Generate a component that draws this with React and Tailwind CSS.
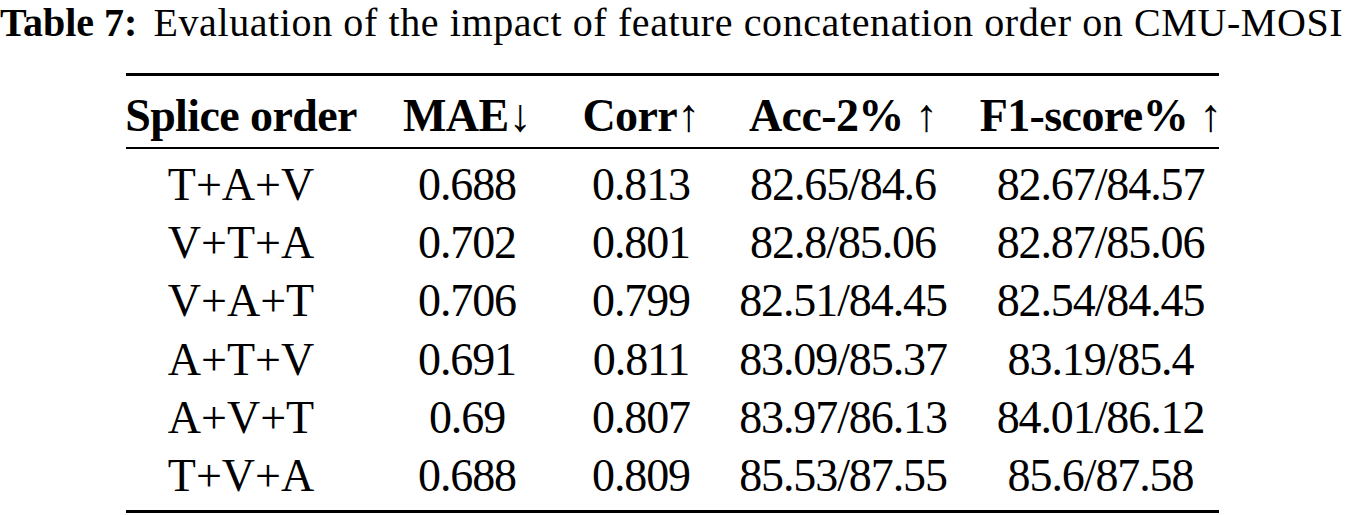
import React from "react";

const rows = [
  ["T+A+V", "0.688", "0.813", "82.65/84.6", "82.67/84.57"],
  ["V+T+A", "0.702", "0.801", "82.8/85.06", "82.87/85.06"],
  ["V+A+T", "0.706", "0.799", "82.51/84.45", "82.54/84.45"],
  ["A+T+V", "0.691", "0.811", "83.09/85.37", "83.19/85.4"],
  ["A+V+T", "0.69", "0.807", "83.97/86.13", "84.01/86.12"],
  ["T+V+A", "0.688", "0.809", "85.53/87.55", "85.6/87.58"],
];

const headers = ["Splice order", "MAE↓", "Corr↑", "Acc-2% ↑", "F1-score% ↑"];

const cols = "grid grid-cols-[230px_222px_126px_278px_237px]";

function App() {
  return (
    <div className="w-[1346px] h-[515px] bg-white text-black font-['Liberation_Serif','Times_New_Roman',serif] overflow-hidden">
      {/* Caption */}
      <div className="text-[40px] leading-[45px] whitespace-nowrap">
        <span className="font-bold">Table 7:</span>
        <span className="ml-[16px] tracking-[0.6px]">
          Evaluation of the impact of feature concatenation order on CMU-MOSI
        </span>
      </div>

      {/* Table */}
      <div className="ml-[126px] mt-[28px] w-[1093px]">
        <div className="border-t-[3px] border-black" />
        <div className={`${cols} pt-[11px] text-[46px] leading-[58px] font-bold tracking-[-0.6px]`}>
          {headers.map((h) => (
            <div key={h} className="flex justify-center whitespace-nowrap">
              {h}
            </div>
          ))}
        </div>
        <div className="mt-[2px] border-t-2 border-black" />
        <div className="pt-[7px] pb-[5px] text-[46px] leading-[58.2px]">
          {rows.map((r, i) => (
            <div key={i} className={cols}>
              {r.map((c, j) => (
                <div
                  key={j}
                  className={`flex justify-center whitespace-nowrap ${j > 0 ? "tracking-[-1.1px]" : ""}`}
                >
                  {c}
                </div>
              ))}
            </div>
          ))}
        </div>
        <div className="border-t-[3px] border-black" />
      </div>
    </div>
  );
}

export default App;
